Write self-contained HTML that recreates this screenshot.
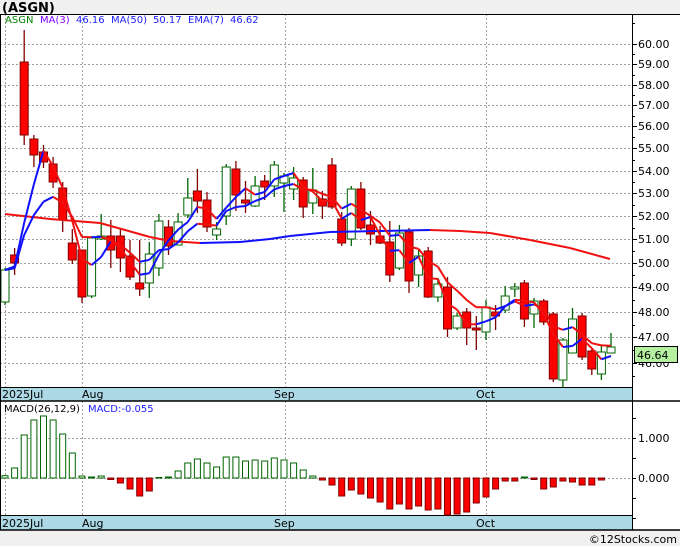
<!DOCTYPE html>
<html><head><meta charset="utf-8"><style>
body{margin:0;background:#f0f0f0;width:680px;height:546px;overflow:hidden;font-family:"DejaVu Sans","Liberation Sans",sans-serif}
svg{display:block}
</style></head><body>
<svg id="s" width="680" height="546" xmlns="http://www.w3.org/2000/svg" font-family="DejaVu Sans, Liberation Sans, sans-serif">
<rect x="0" y="0" width="680" height="546" fill="#f0f0f0"/>
<rect x="0" y="14" width="680" height="516" fill="#fff"/>
<text x="2" y="12" font-size="13" font-weight="bold" fill="#000">(ASGN)</text>
<text x="677" y="543" font-size="11" text-anchor="end" fill="#000">©12Stocks.com</text>
<g id="g"></g>
</svg>
<script>
var g=document.getElementById('g'),h='';
function L(x1,y1,x2,y2,c,w,d){h+='<line x1="'+x1+'" y1="'+y1+'" x2="'+x2+'" y2="'+y2+'" stroke="'+c+'" stroke-width="'+(w||1)+'"'+(d?' stroke-dasharray="'+d+'"':'')+'/>';}
function R(x,y,w,hh,f,s){h+='<rect x="'+x+'" y="'+y+'" width="'+w+'" height="'+hh+'" fill="'+f+'"'+(s?' stroke="'+s+'"':'')+'/>';}
function T(x,y,t,c,sz,a){h+='<text x="'+x+'" y="'+y+'" font-size="'+(sz||11)+'" fill="'+c+'"'+(a?' text-anchor="'+a+'"':'')+'>'+t+'</text>';}
// price grid
var lv=[[60,44],[59,64],[58,85],[57,105],[56,126],[55,148],[54,171],[53,193],[52,216],[51,239],[50,263],[49,287],[48,312],[47,337],[46,363]];
lv.forEach(function(a){L(0,a[1]+.5,632,a[1]+.5,'#a0a0a0',1,'2,2');L(632,a[1]+.5,637,a[1]+.5,'#000');T(638,a[1]+4,a[0].toFixed(2),'#000',11);});
for(var i=0;i<lv.length-1;i++){var m=Math.round((lv[i][1]+lv[i+1][1])/2)+.5;L(632,m,635,m,'#000');}
L(632,23.5,635,23.5,'#000');L(632,376.5,635,376.5,'#000');
[5,82,285,486].forEach(function(x){L(x+.5,14,x+.5,387,'#a0a0a0',1,'2,2');L(x+.5,401,x+.5,515,'#a0a0a0',1,'2,2');});
// macd grid
L(0,438.5,632,438.5,'#a0a0a0',1,'2,2');L(0,478.5,632,478.5,'#a0a0a0',1,'2,2');
[418,438,458,478,498,518].forEach(function(y){L(632,y+.5,636,y+.5,'#000');});
T(638,442,'1.000','#000',11);T(638,482,'0.000','#000',11);
// candles [open,close,high,low] in y
var C=[[302,270,268,305],[255,263,248,275],[62,135,30,145],[139,155,135,167],[152,162,145,168],[164,182,157,188],[188,220,182,232],[243,260,229,264],[250,297,250,303],[296,238,236,298],[239,236,214,240],[236,250,220,268],[236,258,228,272],[256,277,240,280],[283,289,240,296],[283,254,242,298],[268,221,214,276],[227,246,220,255],[245,222,213,245],[215,198,178,218],[191,201,169,213],[200,227,192,232],[235,229,222,240],[216,167,164,225],[169,195,161,211],[200,203,181,213],[206,186,176,207],[181,187,175,200],[186,165,161,197],[183,176,173,212],[189,178,167,200],[180,207,177,218],[203,190,168,214],[199,206,191,219],[165,207,158,209],[219,243,212,246],[239,189,186,246],[189,228,182,230],[225,234,211,245],[236,243,226,244],[242,275,221,282],[268,233,225,270],[232,281,228,293],[275,256,250,287],[251,297,247,298],[297,284,278,302],[287,329,277,337],[328,316,313,330],[312,328,308,345],[328,329,316,350],[332,307,300,340],[312,316,305,330],[310,296,286,313],[289,287,283,297],[283,319,280,327],[314,301,298,328],[301,322,299,325],[314,379,312,382],[380,340,338,387],[353,319,308,353],[316,357,313,360],[351,369,349,375],[374,352,345,380],[353,347,333,353]];
var sp=(611-5)/63,X=[];
C.forEach(function(c,i){var x=5+sp*i;X.push(x);var up=c[1]<c[0],col=up?'#006400':'#800000';
L(x.toFixed(1),c[2],x.toFixed(1),c[3],col,1.3);
var t=Math.min(c[0],c[1]),b=Math.max(c[0],c[1]);if(b-t<2)b=t+2;
R((x-4).toFixed(1),t,8,b-t,up?'#fff':'#f00',up?'#006400':'#800000');});
// MA50 path
var M=[[5,214],[50,219],[100,223],[150,237],[170,241],[200,243],[240,242],[270,239],[290,236],[330,232],[380,231],[430,230],[460,231],[490,233],[530,240],[570,248],[610,259]];
function seg(P,w){for(var i=0;i<P.length-1;i++){var c=P[i+1][1]<P[i][1]-0.3?'#1010ff':'#f01010';L(P[i][0].toFixed(1),P[i][1].toFixed(1),P[i+1][0].toFixed(1),P[i+1][1].toFixed(1),c,w);}}
for(var i=0;i<M.length-1;i++){L(M[i][0],M[i][1],M[i+1][0],M[i+1][1],(M[i][0]>=190&&M[i][0]<430)?'#1010ff':'#f01010',2);}
var cl=C.map(function(c){return c[1];}),A=[],E=[],e=cl[0];
cl.forEach(function(v,i){var s=0,n=0;for(var j=Math.max(0,i-2);j<=i;j++){s+=cl[j];n++;}A.push([X[i],s/n]);e=i?e+(v-e)*0.25:v;E.push([X[i],e]);});
seg(E,2);seg(A,2);
// date bands
R(0,387,632,14,'#add8e6');L(0,387.5,632,387.5,'#000');L(0,401,680,401,'#000',1.5);
R(0,515,632,15,'#add8e6');L(0,515.5,632,515.5,'#000');L(0,530,680,530,'#000',1.5);
L(632.5,14,632.5,530,'#000');L(0,14.5,680,14.5,'#000');L(0.5,14,0.5,530,'#000');
[[2,'2025Jul'],[82,'Aug'],[274,'Sep'],[476,'Oct']].forEach(function(a){T(a[0],398,a[1],'#000',11);T(a[0],527,a[1],'#000',11);});
// macd bars
var B=[475.7,468,435,420,416,420,434,453,476,477,476,479,483,489,496,491,477.5,477,471,463,459,463,467,457,457,461,460,461,458,460,463,470,476,480,485,496,490,494,498,502,509,504,509,506,510,509,515,514,512,503,497,489,481,481,477,478.5,489,487,481,482,485,485,480];
B.forEach(function(y,i){var x=5+sp*i-3;if(y<478){R(x.toFixed(1),y,6,478-y,'#fff','#006400');}else{var hh=Math.max(y-478,1.5);R(x.toFixed(1),478,6,hh,'#f00','#800000');}});
// legends
h+='<text y="23" font-size="10"><tspan x="5" fill="#008000">ASGN</tspan><tspan x="40" fill="#8000ff">MA(3)</tspan><tspan x="76" fill="#2020ff">46.16</tspan><tspan x="111" fill="#2020ff">MA(50)</tspan><tspan x="153" fill="#2020ff">50.17</tspan><tspan x="188" fill="#2020ff">EMA(7)</tspan><tspan x="230" fill="#2020ff">46.62</tspan></text>';
h+='<text y="412" font-size="10"><tspan x="4" fill="#000">MACD(26,12,9)</tspan><tspan x="88" fill="#2020ff">MACD:-0.055</tspan></text>';
R(634.5,346.5,43,16,'#b4f0a0','#000');T(637,359,'46.64','#000',11);
g.innerHTML=h;
</script>
</body></html>
